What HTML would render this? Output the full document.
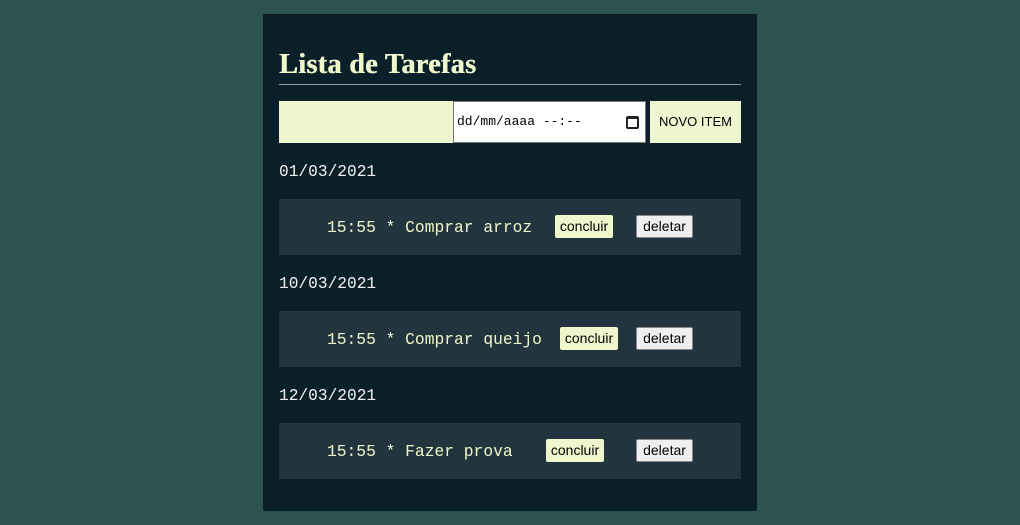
<!DOCTYPE html>
<html><head><style>
body{margin:0;background:#2c5252;width:1020px;height:525px;position:relative;overflow:hidden}
.panel{position:absolute;left:263px;top:14px;width:494px;height:497px;background:#0b1f28}
h1{position:absolute;left:279px;top:49px;margin:0;font:bold 28px "Liberation Serif",serif;color:#eef7cc;letter-spacing:0.4px;text-shadow:0.6px 0 0 #eef7cc}
.hr{position:absolute;left:279px;top:84px;width:462px;height:1px;background:#8a9a9e}
.in{position:absolute;top:101px;height:42px}
.date{position:absolute;left:279px;font:16.2px "Liberation Mono",monospace;color:#f2f2f2}
.item{position:absolute;left:279px;width:462px;height:56px;background:#22343d}
.t{position:absolute;left:48px;top:19px;font:16.3px "Liberation Mono",monospace;color:#eef7cc;white-space:pre}
.b{position:absolute;top:16px;height:23px;font:14px "Liberation Sans",sans-serif;color:#000;box-sizing:border-box;border-radius:2px;text-align:center;line-height:23px}
.c{background:#eef7cc;width:58px}
.d{background:#efefef;border:1px solid #888;width:57px;left:357px;line-height:21px}
</style></head><body>
<div class="panel"></div>
<h1>Lista de Tarefas</h1>
<div class="hr"></div>
<div class="in" style="left:279px;width:174px;background:#eef7d0"></div>
<div class="in" style="left:453px;width:193px;background:#fff;box-sizing:border-box;border:1px solid #777;font:13px 'Liberation Mono',monospace;color:#000;line-height:40px;padding-left:3px">dd/mm/aaaa --:--<span style="position:absolute;right:6px;top:14px;width:13px;height:13px;border:2px solid #222;border-top-width:3px;border-radius:2px;box-sizing:border-box"></span></div>
<div class="in" style="left:650px;width:91px;background:#eef7d0;font:13px 'Liberation Sans',sans-serif;line-height:42px;text-align:center;color:#000">NOVO ITEM</div>

<div class="date" style="top:163px">01/03/2021</div>
<div class="item" style="top:199px"><div class="t">15:55 * Comprar arroz</div><div class="b c" style="left:276px">concluir</div><div class="b d">deletar</div></div>
<div class="date" style="top:275px">10/03/2021</div>
<div class="item" style="top:311px"><div class="t">15:55 * Comprar queijo</div><div class="b c" style="left:281px">concluir</div><div class="b d">deletar</div></div>
<div class="date" style="top:387px">12/03/2021</div>
<div class="item" style="top:423px"><div class="t">15:55 * Fazer prova</div><div class="b c" style="left:267px">concluir</div><div class="b d">deletar</div></div>
</body></html>
